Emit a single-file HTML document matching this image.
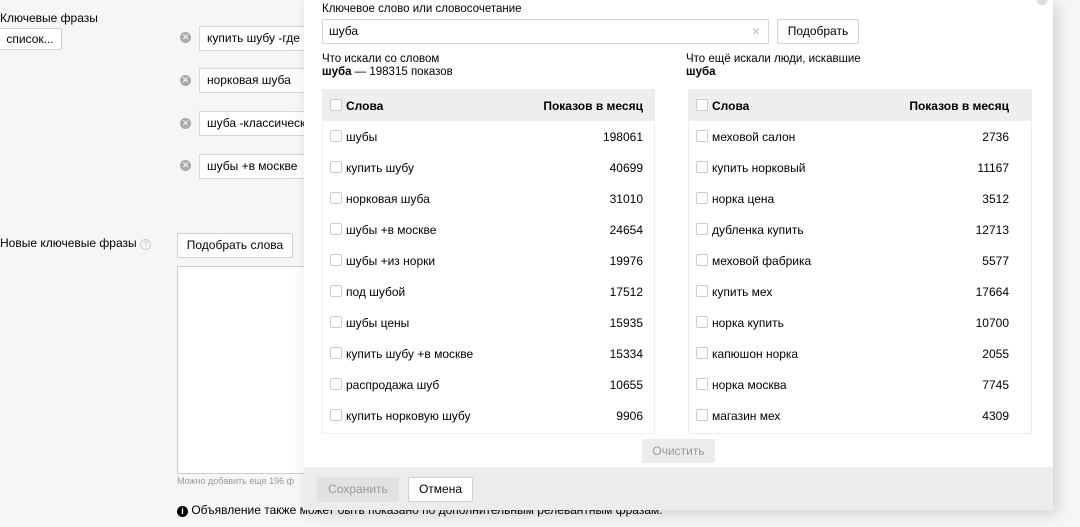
<!DOCTYPE html>
<html><head><meta charset="utf-8"><style>
*{box-sizing:border-box;margin:0;padding:0}
body{width:1080px;height:527px;background:#f6f6f6;font-family:"Liberation Sans",sans-serif;font-size:12px;color:#000;position:relative;overflow:hidden}
.a{position:absolute}
.btn{position:absolute;background:#fff;border:1px solid #d0d0d0;border-radius:2px;font-size:12px;text-align:center}
.inp{position:absolute;background:#fff;border:1px solid #d8d8d8;padding-left:7px;font-size:12px;white-space:nowrap;overflow:hidden}
.x{position:absolute;width:11px;height:11px;border-radius:50%;background:#aaa;color:#fff;font-size:9px;line-height:11px;text-align:center}
.pop{position:absolute;left:304px;top:0;width:749px;height:510px;background:#fff;box-shadow:4px 4px 14px rgba(0,0,0,.15)}
.tbl{position:absolute;top:89px;height:345px;border:1px solid #eee;background:#fff}
.th{height:31px;background:#eee;font-weight:bold;position:relative}
.row{height:31px;position:relative}
.cb{position:absolute;left:7px;top:9px;width:12px;height:12px;border:1px solid #ccc;border-radius:2px;background:#fff}
.w{position:absolute;left:23px;top:9px}
.n{position:absolute;right:11px;top:9px}
</style></head><body>
<div class="a" style="left:0;top:11px">Ключевые фразы</div>
<div class="btn" style="left:-2px;top:28px;width:64px;height:22px;line-height:20px">список...</div>
<div class="x" style="left:180px;top:32px">✕</div><div class="inp" style="left:199px;top:26px;width:110px;height:25px;line-height:23px">купить шубу -где</div>
<div class="x" style="left:180px;top:75px">✕</div><div class="inp" style="left:199px;top:68px;width:110px;height:25px;line-height:23px">норковая шуба</div>
<div class="x" style="left:180px;top:118px">✕</div><div class="inp" style="left:199px;top:111px;width:110px;height:25px;line-height:23px">шуба -классическ</div>
<div class="x" style="left:180px;top:160px">✕</div><div class="inp" style="left:199px;top:154px;width:110px;height:25px;line-height:23px">шубы +в москве</div>
<div class="a" style="left:0;top:236px">Новые ключевые фразы <span style="display:inline-block;width:11px;height:11px;border:1px solid #ccc;border-radius:50%;color:#bbb;font-size:8px;line-height:9px;text-align:center">?</span></div>
<div class="btn" style="left:177px;top:233px;width:116px;height:25px;line-height:23px">Подобрать слова</div>
<div class="a" style="left:177px;top:266px;width:130px;height:208px;background:#fff;border:1px solid #ccc"></div>
<div class="a" style="left:177px;top:476px;font-size:9px;color:#999">Можно добавить еще 196 ф</div>
<div class="a" style="left:177px;top:503px"><span style="display:inline-block;width:11px;height:11px;border-radius:50%;background:#000;color:#fff;font-size:9px;line-height:11px;text-align:center;font-weight:bold">i</span> Объявление также может быть показано по дополнительным релевантным фразам.</div>
<div class="pop">
<div class="a" style="left:18px;top:3px;font-size:11.5px">Ключевое слово или словосочетание</div>
<div class="inp" style="left:18px;top:19px;width:447px;height:25px;line-height:23px;padding-left:6px">шуба<span style="position:absolute;right:8px;color:#bbb;font-size:14px">×</span></div>
<div class="btn" style="left:473px;top:19px;width:82px;height:25px;line-height:23px">Подобрать</div>
<div class="a" style="left:18px;top:53px;font-size:11.5px;line-height:13px">Что искали со словом<br><b>шуба</b> — 198315 показов</div>
<div class="a" style="left:382px;top:53px;font-size:11.5px;line-height:13px">Что ещё искали люди, искавшие<br><b>шуба</b></div>
<div class="tbl" style="left:18px;width:333px">
<div class="th"><div class="cb"></div><div class="w">Слова</div><div class="n">Показов в месяц</div></div>
<div class="row"><div class="cb"></div><div class="w">шубы</div><div class="n">198061</div></div>
<div class="row"><div class="cb"></div><div class="w">купить шубу</div><div class="n">40699</div></div>
<div class="row"><div class="cb"></div><div class="w">норковая шуба</div><div class="n">31010</div></div>
<div class="row"><div class="cb"></div><div class="w">шубы +в москве</div><div class="n">24654</div></div>
<div class="row"><div class="cb"></div><div class="w">шубы +из норки</div><div class="n">19976</div></div>
<div class="row"><div class="cb"></div><div class="w">под шубой</div><div class="n">17512</div></div>
<div class="row"><div class="cb"></div><div class="w">шубы цены</div><div class="n">15935</div></div>
<div class="row"><div class="cb"></div><div class="w">купить шубу +в москве</div><div class="n">15334</div></div>
<div class="row"><div class="cb"></div><div class="w">распродажа шуб</div><div class="n">10655</div></div>
<div class="row"><div class="cb"></div><div class="w">купить норковую шубу</div><div class="n">9906</div></div>
</div>
<div class="tbl" style="left:384px;width:344px">
<div class="th"><div class="cb"></div><div class="w">Слова</div><div class="n" style="right:22px">Показов в месяц</div></div>
<div class="row"><div class="cb"></div><div class="w">меховой салон</div><div class="n" style="right:22px">2736</div></div>
<div class="row"><div class="cb"></div><div class="w">купить норковый</div><div class="n" style="right:22px">11167</div></div>
<div class="row"><div class="cb"></div><div class="w">норка цена</div><div class="n" style="right:22px">3512</div></div>
<div class="row"><div class="cb"></div><div class="w">дубленка купить</div><div class="n" style="right:22px">12713</div></div>
<div class="row"><div class="cb"></div><div class="w">меховой фабрика</div><div class="n" style="right:22px">5577</div></div>
<div class="row"><div class="cb"></div><div class="w">купить мех</div><div class="n" style="right:22px">17664</div></div>
<div class="row"><div class="cb"></div><div class="w">норка купить</div><div class="n" style="right:22px">10700</div></div>
<div class="row"><div class="cb"></div><div class="w">капюшон норка</div><div class="n" style="right:22px">2055</div></div>
<div class="row"><div class="cb"></div><div class="w">норка москва</div><div class="n" style="right:22px">7745</div></div>
<div class="row"><div class="cb"></div><div class="w">магазин мех</div><div class="n" style="right:22px">4309</div></div>
</div>
<div class="a" style="left:338px;top:439px;width:73px;height:24px;background:#ececec;color:#999;text-align:center;line-height:24px;border-radius:2px">Очистить</div>
<div class="a" style="left:0;top:467px;width:749px;height:43px;background:#ececec"></div>
<div class="a" style="left:13px;top:477px;width:82px;height:25px;background:#e2e2e2;color:#999;text-align:center;line-height:25px;border-radius:2px">Сохранить</div>
<div class="btn" style="left:104px;top:477px;width:65px;height:25px;line-height:23px">Отмена</div>
</div>
<div class="a" style="left:1036px;top:-7px;width:12px;height:12px;border-radius:50%;background:#ddd"></div>
</body></html>
